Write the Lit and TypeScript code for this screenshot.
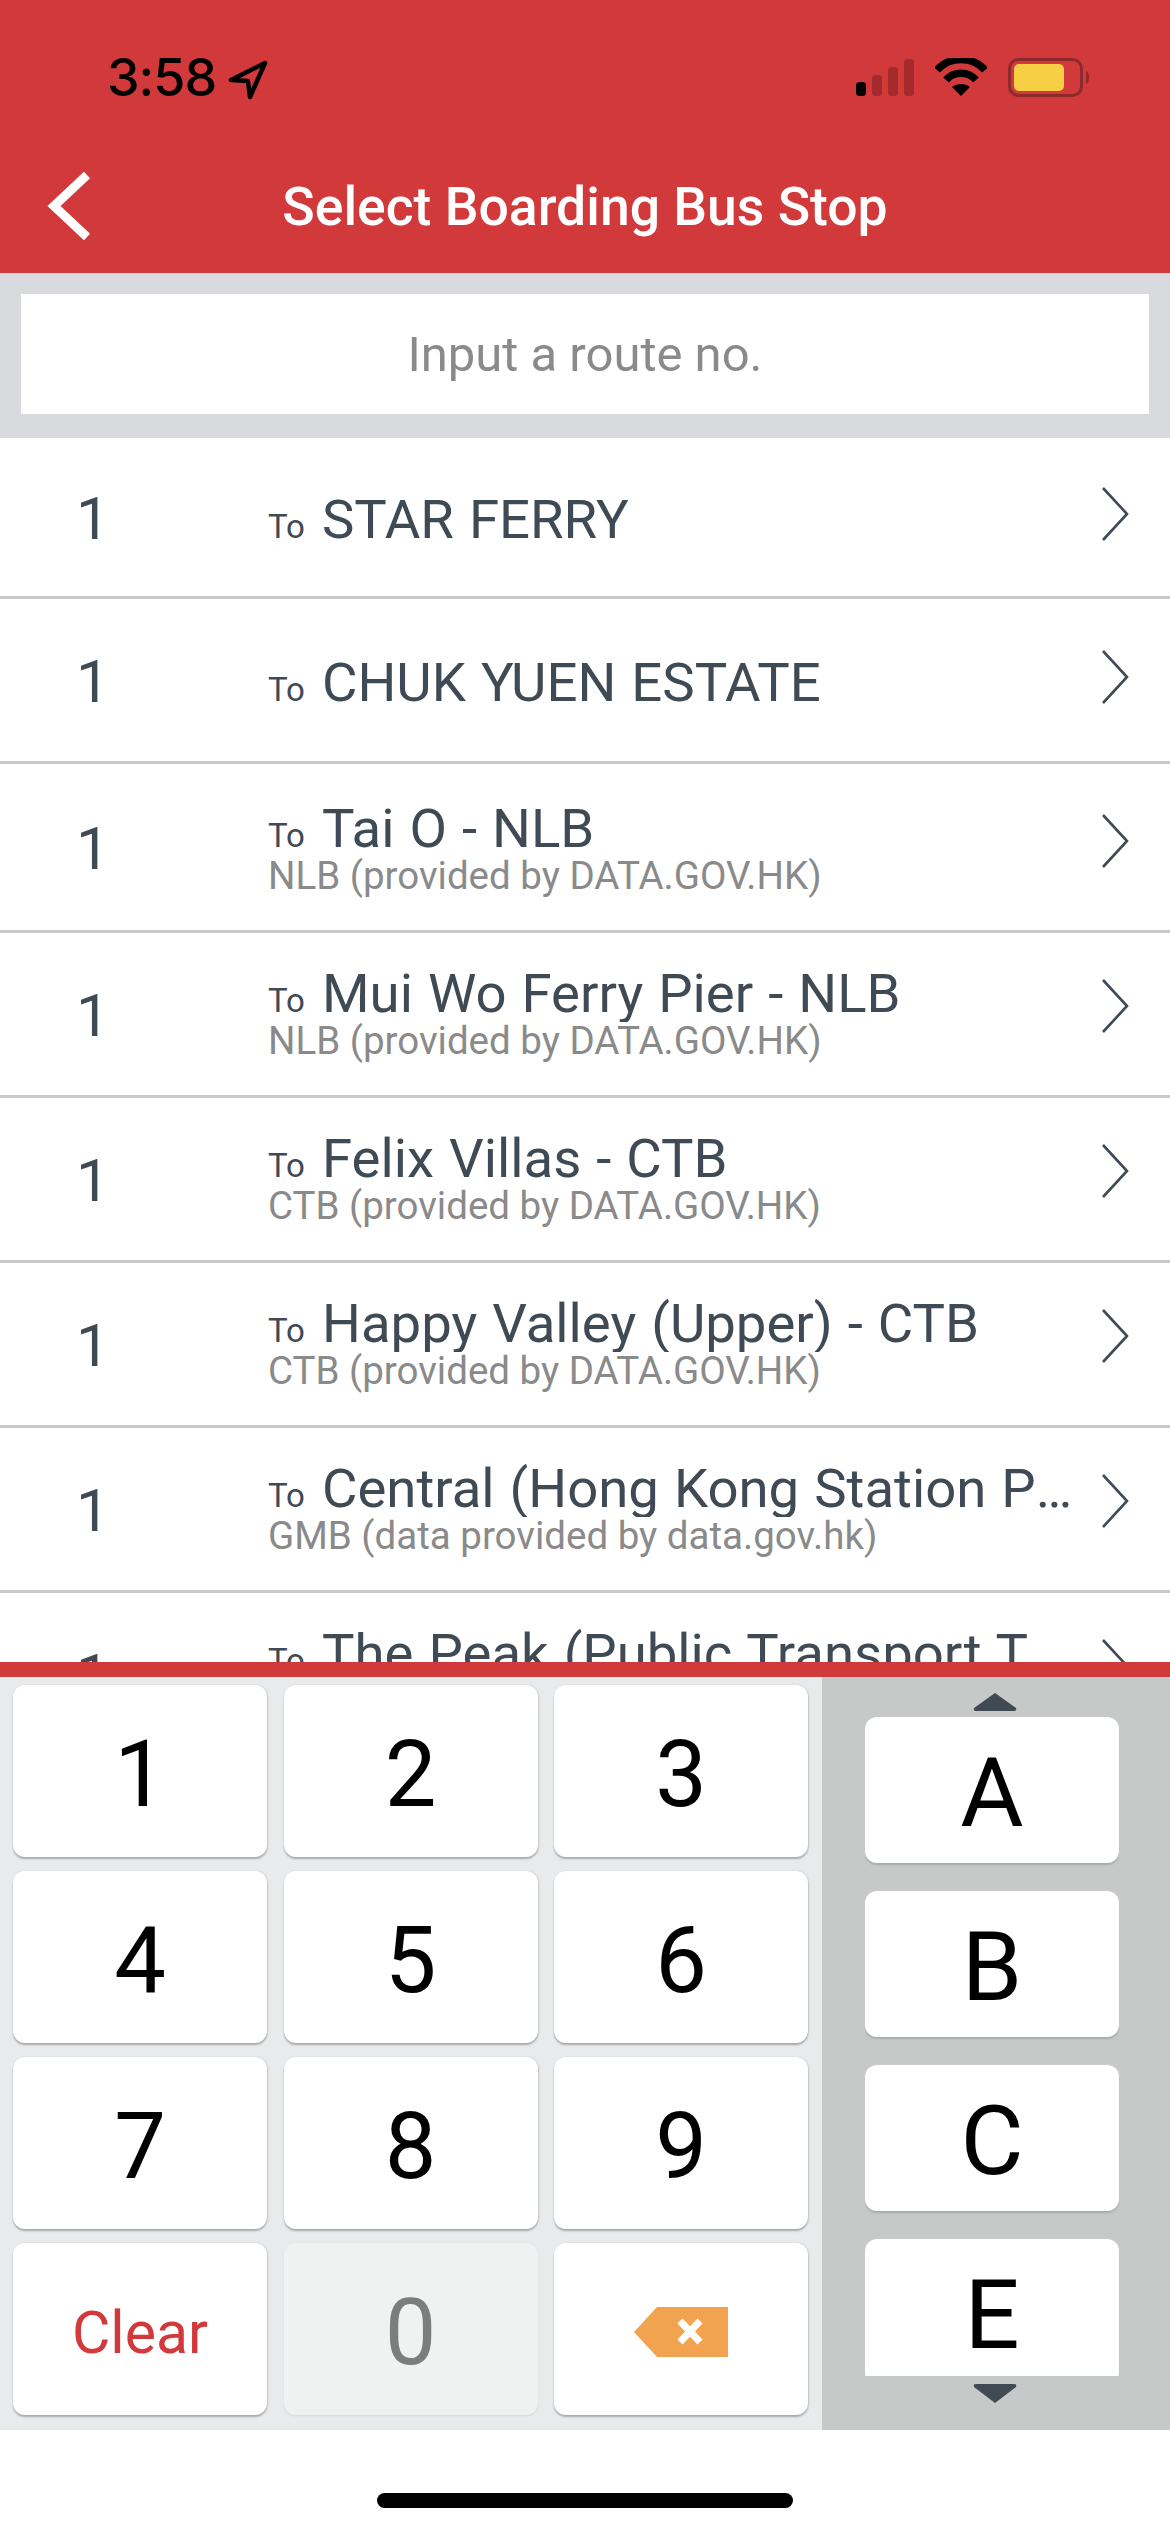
import { LitElement, html, css, svg } from 'lit';
import { customElement } from 'lit/decorators.js';

const NLB = 'NLB (provided by DATA.GOV.HK)';
const CTB = 'CTB (provided by DATA.GOV.HK)';
const GMB = 'GMB (data provided by data.gov.hk)';

const ROUTES = [
  { dest: 'STAR FERRY', kind: 'first' },
  { dest: 'CHUK YUEN ESTATE', kind: '' },
  { dest: 'Tai O - NLB', sub: NLB, kind: 'tall' },
  { dest: 'Mui Wo Ferry Pier - NLB', sub: NLB, kind: '' },
  { dest: 'Felix Villas - CTB', sub: CTB, kind: '' },
  { dest: 'Happy Valley (Upper) - CTB', sub: CTB, kind: '' },
  { dest: 'Central (Hong Kong Station Public Pier) - GMB', sub: GMB, kind: '' },
  { dest: 'The Peak (Public Transport Terminus) - GMB', sub: GMB, kind: '' },
];

const chevron = html`<svg class="chevron" width="30" height="56" viewBox="0 0 30 56">
  <polyline points="3,2 27,28 3,54" fill="none" stroke="#3f4a54" stroke-width="2.6" />
</svg>`;

const signalBars = [
  { x: 0, y: 24, h: 14, fill: '#000' },
  { x: 16, y: 17, h: 21, fill: '#a52a2b' },
  { x: 32, y: 9, h: 29, fill: '#a52a2b' },
  { x: 48, y: 1, h: 37, fill: '#a52a2b' },
];

@customElement('app-root')
export class AppRoot extends LitElement {
  static styles = css`
    :host {
      display: flex;
      flex-direction: column;
      width: 1170px;
      height: 2532px;
      background: #fff;
      font-family: Roboto, 'Liberation Sans', sans-serif;
      overflow: hidden;
    }

    .header {
      height: 273px;
      flex: none;
      background: #d2393b;
      display: flex;
      flex-direction: column;
    }

    .status {
      height: 170px;
      flex: none;
      display: flex;
      align-items: flex-start;
      padding: 58px 78px 0 107px;
      box-sizing: border-box;
    }

    .time {
      font-size: 52px;
      line-height: 40px;
      font-weight: 500;
      color: #000;
      font-family: Inter, Roboto, sans-serif;
      letter-spacing: -1px;
    }

    .loc {
      margin: 2px 0 0 12px;
    }

    .status-right {
      margin-left: auto;
      display: flex;
      gap: 21px;
      align-items: flex-start;
    }

    .title-bar {
      display: flex;
      align-items: center;
      justify-content: center;
      height: 72px;
      position: relative;
    }

    .back {
      position: absolute;
      left: 46px;
      top: 0;
    }

    .title {
      font-size: 53.5px;
      font-weight: 500;
      color: #fff;
    }

    .search {
      height: 165px;
      flex: none;
      box-sizing: border-box;
      background: #d9dade;
      padding: 21px;
    }

    .search-box {
      height: 120px;
      background: #fff;
      display: flex;
      align-items: center;
      justify-content: center;
      font-size: 49px;
      color: #8a8a8a;
    }

    .list {
      flex: 1;
      min-height: 0;
      overflow: hidden;
    }

    .row {
      height: 165px;
      box-sizing: border-box;
      border-bottom: 3px solid #c9c9c9;
      display: flex;
      align-items: center;
      padding-right: 40px;
      color: #3f4a54;
    }

    .row.first {
      height: 161px;
    }

    .row.tall {
      height: 169px;
    }

    .num {
      width: 268px;
      flex: none;
      padding: 2px 0 0 76px;
      box-sizing: border-box;
      font-size: 60px;
    }

    .body {
      flex: 1;
      min-width: 0;
      margin-top: 4px;
    }

    .body.has-sub {
      margin-top: -4px;
    }

    .tall .body.has-sub {
      margin-top: 0;
    }

    .line {
      display: flex;
      align-items: baseline;
      height: 58px;
      line-height: 58px;
    }

    .to {
      font-size: 33px;
      width: 54px;
      flex: none;
      color: #3f4a54;
    }

    .dest {
      font-size: 54.5px;
      word-spacing: 1.5px;
      white-space: nowrap;
      overflow: hidden;
      text-overflow: ellipsis;
      flex: 1;
      min-width: 0;
    }

    .sub {
      font-size: 38.5px;
      line-height: 38px;
      color: #8a8a8a;
    }

    .chevron {
      flex: none;
      margin: -7px 0 0 18px;
    }

    .body.has-sub + .chevron {
      margin-top: -16px;
    }

    .tall .body.has-sub + .chevron {
      margin-top: -12px;
    }

    .divider {
      height: 15px;
      flex: none;
      background: #d2393b;
    }

    .keypad {
      height: 753px;
      flex: none;
      display: flex;
    }

    .pad {
      width: 822px;
      flex: none;
      box-sizing: border-box;
      background: #e9eaec;
      padding: 8px 0 0 13px;
      display: grid;
      grid-template-columns: repeat(3, 254px);
      grid-auto-rows: 172px;
      column-gap: 16.5px;
      row-gap: 14px;
    }

    .key {
      background: #fff;
      border-radius: 12px;
      box-shadow: 0 2px 2px #a9abaa, 1px 0 2px #d0d2d3;
      display: flex;
      align-items: center;
      justify-content: center;
      box-sizing: border-box;
      padding-top: 6px;
      font-size: 92px;
      color: #000;
    }

    .key.clear {
      font-size: 59px;
      color: #d2393b;
    }

    .key.zero {
      background: #f0f2f1;
      color: #7b7e7d;
      box-shadow: 0 1px 2px #d5d7d6;
    }

    .letters {
      flex: 1;
      background: #c7c9c8;
      display: flex;
      flex-direction: column;
      align-items: flex-start;
      padding: 15px 0 0 43px;
      box-sizing: border-box;
    }

    .arrow {
      margin-left: 108px;
      flex: none;
    }

    .window {
      width: 260px;
      height: 659px;
      flex: none;
      margin: 6px 0 8px;
      overflow: hidden;
      display: flex;
      flex-direction: column;
      gap: 28px;
    }

    .letter {
      width: 254px;
      height: 146px;
      flex: none;
      font-size: 97px;
    }

    .home {
      height: 102px;
      flex: none;
      display: flex;
      justify-content: center;
      padding-top: 63px;
      box-sizing: border-box;
    }

    .home-bar {
      width: 416px;
      height: 15px;
      border-radius: 8px;
      background: #000;
    }
  `;

  renderStatus() {
    return html`
      <div class="status">
        <span class="time">3:58</span>
        <svg class="loc" width="40" height="40" viewBox="0 0 40 40">
          <path d="M37 3 L3 20 L20 21 L22 37 Z" fill="none" stroke="#000" stroke-width="4.5" stroke-linejoin="round" />
        </svg>
        <div class="status-right">
          <svg width="58" height="39" viewBox="0 0 58 39">
            ${signalBars.map(
              (b) => svg`<rect x=${b.x} y=${b.y} width="10" height=${b.h} rx="3.5" fill=${b.fill} />`
            )}
          </svg>
          <svg width="52" height="39" viewBox="0 0 52 39">
            <path d="M2 12 C15 -2 37 -2 50 12" fill="none" stroke="#000" stroke-width="7.5" />
            <path d="M11 22 C19 13 33 13 41 22" fill="none" stroke="#000" stroke-width="7.5" />
            <path d="M26 38 L17 29 C22 25 30 25 35 29 Z" fill="#000" />
          </svg>
          <svg width="84" height="40" viewBox="0 0 84 40">
            <rect x="1.5" y="1.5" width="72" height="36" rx="9" fill="none" stroke="#8e2a2b" stroke-width="3" />
            <rect x="6" y="6" width="50" height="27" rx="5" fill="#f6cf45" />
            <path d="M78 13 C82 14 82 25 78 26 Z" fill="#8e2a2b" />
          </svg>
        </div>
      </div>
    `;
  }

  renderRow(route: { dest: string; sub?: string; kind: string }) {
    return html`
      <div class="row ${route.kind}">
        <div class="num">1</div>
        <div class="body ${route.sub ? 'has-sub' : ''}">
          <div class="line">
            <span class="to">To</span>
            <span class="dest">${route.dest}</span>
          </div>
          ${route.sub ? html`<div class="sub">${route.sub}</div>` : ''}
        </div>
        ${chevron}
      </div>
    `;
  }

  render() {
    return html`
      <div class="header">
        ${this.renderStatus()}
        <div class="title-bar">
          <svg class="back" width="46" height="72" viewBox="0 0 46 72">
            <polyline points="41,5 8,36 41,67" fill="none" stroke="#fff" stroke-width="9" />
          </svg>
          <span class="title">Select Boarding Bus Stop</span>
        </div>
      </div>
      <div class="search"><div class="search-box">Input a route no.</div></div>
      <div class="list">${ROUTES.map((r) => this.renderRow(r))}</div>
      <div class="divider"></div>
      <div class="keypad">
        <div class="pad">
          ${['1', '2', '3', '4', '5', '6', '7', '8', '9'].map((k) => html`<div class="key">${k}</div>`)}
          <div class="key clear">Clear</div>
          <div class="key zero">0</div>
          <div class="key">
            <svg width="94" height="50" viewBox="0 0 94 50">
              <polygon points="0,25 23,0 94,0 94,50 23,50" fill="#f2a350" />
              <path d="M46 14 L66 35 M66 14 L46 35" stroke="#fff" stroke-width="7" />
            </svg>
          </div>
        </div>
        <div class="letters">
          <svg class="arrow" width="44" height="19" viewBox="0 0 44 19">
            <path d="M22 1 L43 16 Q44 19 41 19 L3 19 Q0 19 1 16 Z" fill="#3f4a54" />
          </svg>
          <div class="window">
            ${['A', 'B', 'C', 'E'].map((k) => html`<div class="key letter">${k}</div>`)}
          </div>
          <svg class="arrow" width="44" height="19" viewBox="0 0 44 19">
            <path d="M22 19 L1 3 Q0 0 3 0 L41 0 Q44 0 43 3 Z" fill="#3f4a54" />
          </svg>
        </div>
      </div>
      <div class="home"><div class="home-bar"></div></div>
    `;
  }
}
